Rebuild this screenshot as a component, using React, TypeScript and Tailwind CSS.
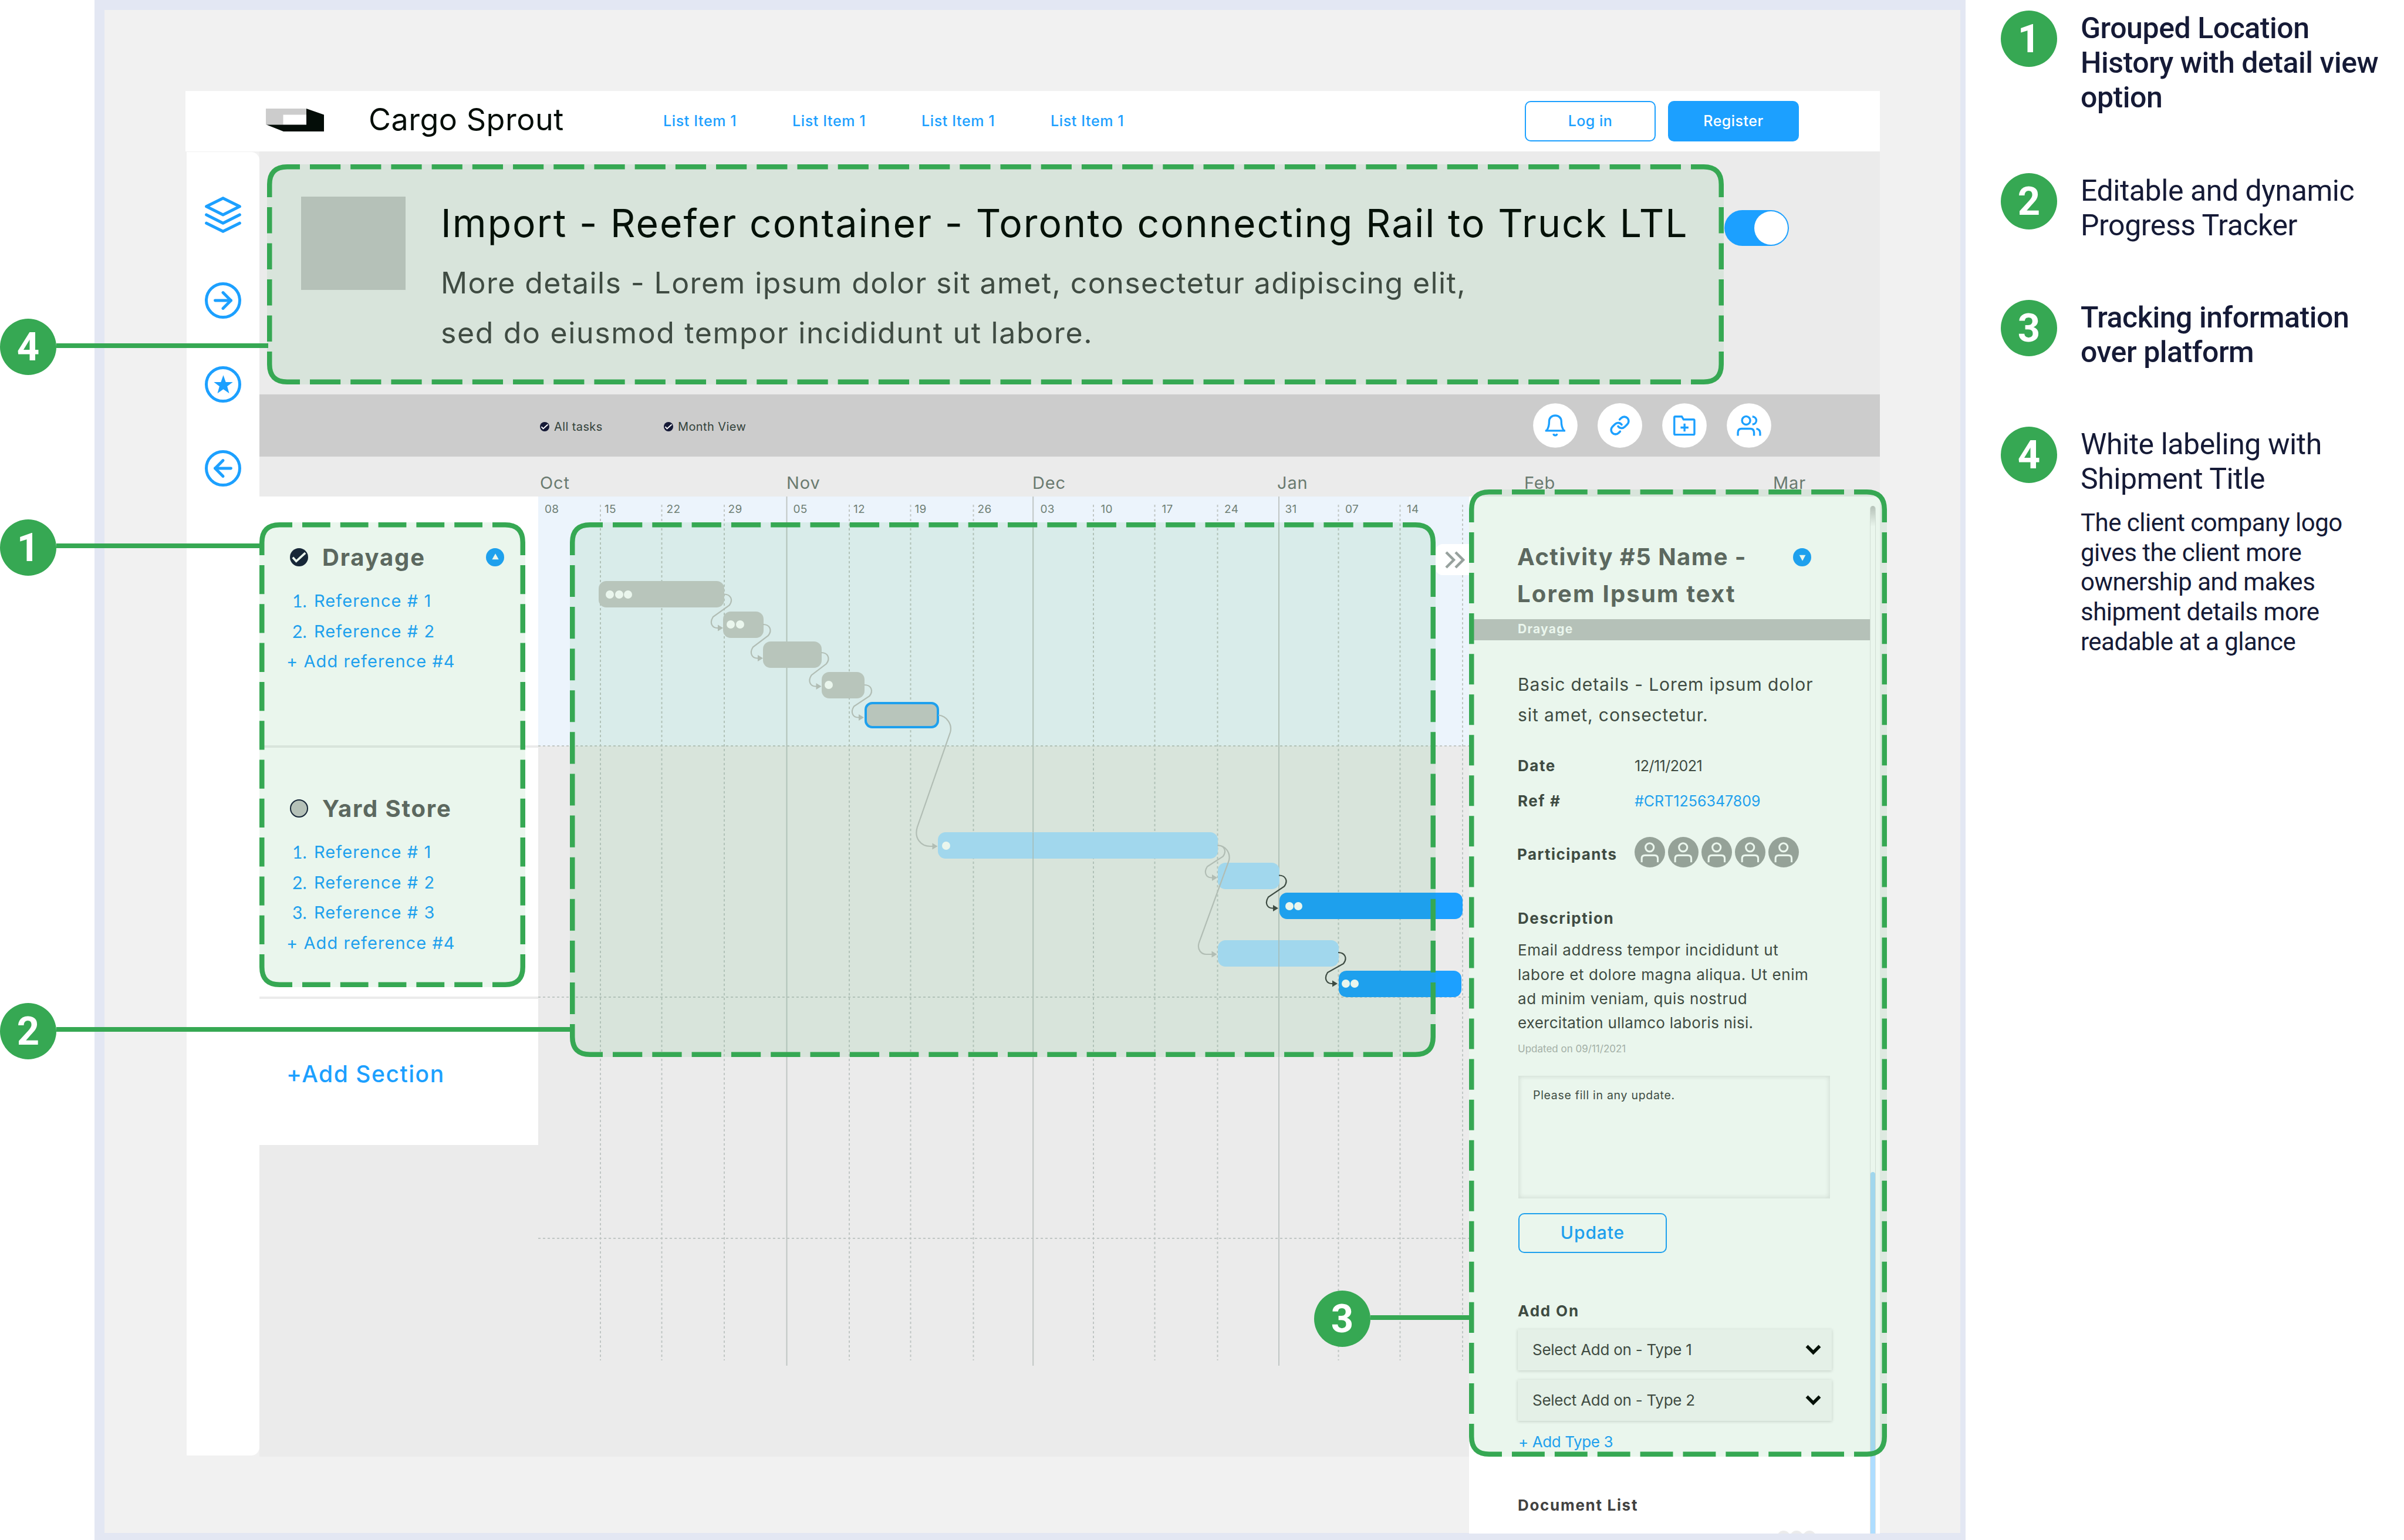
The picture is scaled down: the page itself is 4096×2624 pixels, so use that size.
import React from "react"
import { FiArrowLeft, FiArrowRight, FiLayers, FiLink } from "react-icons/fi"

const GREEN = "#36a853"

// ── Timeline data (px on the chart canvas) ──
const weeks = [
  { label: "08", width: 102 },
  { label: "15", width: 105.5 },
  { label: "22", width: 105 },
  { label: "29", width: 111 },
  { label: "05", width: 102.5 },
  { label: "12", width: 104.5 },
  { label: "19", width: 107 },
  { label: "26", width: 107 },
  { label: "03", width: 103 },
  { label: "10", width: 104 },
  { label: "17", width: 106.5 },
  { label: "24", width: 103.5 },
  { label: "31", width: 102.5 },
  { label: "07", width: 105 },
  { label: "14", width: 90 },
]

const months = [
  { label: "Oct", width: 420 },
  { label: "Nov", width: 419 },
  { label: "Dec", width: 417 },
  { label: "Jan", width: 421 },
  { label: "Feb", width: 424 },
  { label: "Mar", width: 120 },
]

const weekLines = [106, 210.5, 317, 530, 634.5, 741.5, 946, 1050.5, 1157.5, 1363.5, 1468.5, 1575]
const monthLines = [423.5, 843.2, 1262]
const rowLines = [425, 853, 1264]

type Bar = { x: number; y: number; w: number; tone: string; dots: number; pad: number }

const bars: Bar[] = [
  { x: 103, y: 144, w: 213.5, tone: "bg-[#c8c9c8]", dots: 3, pad: 12 },
  { x: 315, y: 195.5, w: 68.5, tone: "bg-[#c8c9c8]", dots: 2, pad: 6 },
  { x: 383, y: 247, w: 99.5, tone: "bg-[#c8c9c8]", dots: 0, pad: 0 },
  { x: 483, y: 298.5, w: 73, tone: "bg-[#c8c9c8]", dots: 1, pad: 5 },
  { x: 555.5, y: 350, w: 127, tone: "bg-[#c8c9c8] border-4 border-[#1ca0ff]", dots: 0, pad: 0 },
  { x: 680.5, y: 572, w: 477, tone: "bg-[#aeddff]", dots: 1, pad: 7 },
  { x: 1157.5, y: 623.5, w: 105, tone: "bg-[#aeddff]", dots: 0, pad: 0 },
  { x: 1262.5, y: 675, w: 312, tone: "bg-[#1ca0ff]", dots: 2, pad: 10 },
  { x: 1157.5, y: 755.5, w: 206, tone: "bg-[#aeddff]", dots: 0, pad: 0 },
  { x: 1363.5, y: 807.5, w: 209, tone: "bg-[#1ca0ff]", dots: 2, pad: 5 },
]

// Short S-shaped dependency between two neighbouring bars
function link(x0: number, y0: number, x1: number, y1: number) {
  return `M${x0} ${y0} C${x0 + 12} ${y0} ${x0 + 16} ${y0 + 10} ${x0 + 9} ${y0 + 19} L${x1 - 17} ${y1 - 19} C${x1 - 24} ${y1 - 8} ${x1 - 18} ${y1} ${x1 - 10} ${y1} H${x1 - 4}`
}

const links = [
  { d: link(316.5, 166.5, 315, 224), tip: [315, 224], color: "#c0c0c0" },
  { d: link(383, 218, 383, 275.5), tip: [383, 275.5], color: "#c0c0c0" },
  { d: link(482, 266, 482.5, 323.5), tip: [482.5, 323.5], color: "#c0c0c0" },
  { d: link(555.5, 321, 555, 376.5), tip: [555, 376.5], color: "#c0c0c0" },
  {
    d: "M682 372.5 C696 374 706 388 702 402 L646 563 C640 582 652 596 668 596 H676",
    tip: [680.5, 596],
    color: "#c0c0c0",
  },
  { d: link(1157.5, 594.5, 1157, 649.5), tip: [1157, 649.5], color: "#c0c0c0" },
  {
    d: "M1157.5 594.5 C1170 594 1180 606 1177 620 L1126 760 C1122 772 1130 780 1138 780 H1152",
    tip: [1156.5, 780],
    color: "#c0c0c0",
  },
  { d: link(1262, 645.5, 1261, 701.5), tip: [1261, 701.5], color: "#3f4141" },
  { d: link(1363, 777, 1362, 830), tip: [1362, 830], color: "#3f4141" },
]

function CheckBadge({ className }: { className: string }) {
  return (
    <svg viewBox="0 0 110 110" className={className} aria-hidden="true">
      <circle cx="55" cy="55" r="55" fill="#151936" />
      <path d="M17 56 L38 79 L93 29" fill="none" stroke="#fff" strokeWidth="13" />
    </svg>
  )
}

function ToggleBadge({ down }: { down?: boolean }) {
  return (
    <svg viewBox="0 0 110 110" className="size-[31px] shrink-0" aria-hidden="true">
      <circle cx="55" cy="55" r="55" fill="#1ca0ff" />
      <path d={down ? "M57 77 L76 42 H38 Z" : "M57 33 L77 68 H37 Z"} fill="#fff" />
    </svg>
  )
}

function Logo() {
  return (
    <svg viewBox="0 0 99 39" className="w-[99px] h-[39px] mb-[5px]" aria-hidden="true">
      <path d="M0 0 H69 V10.500 H29.500 V27.500 H0 Z" fill="#ccc" />
      <path d="M69 0 L99 10.500 V39 H30 L1 27.500 H69 Z" fill="#040d08" />
    </svg>
  )
}

function RoundIcon({ children }: { children: React.ReactNode }) {
  return (
    <div className="size-[62px] rounded-full border-[5px] border-[#1ca0ff] flex items-center justify-center text-[#1ca0ff]">
      {children}
    </div>
  )
}

function Header() {
  return (
    <header className="h-[103px] bg-white flex items-center pl-[137px] pr-[138px]">
      <Logo />
      <span className="w-[502px] ml-[76px] mb-[5px] text-[52px] leading-none tracking-[0.01em] text-[#040d08]">
        Cargo Sprout
      </span>
      <nav className="flex text-[25px] font-medium text-[#1ca0ff]">
        {[1, 2, 3, 4].map((n) => (
          <a key={n} className="w-[220px] whitespace-nowrap tracking-[0.025em]">
            List Item 1
          </a>
        ))}
      </nav>
      <div className="ml-auto flex gap-[21px] text-[25px] font-medium tracking-[0.02em]">
        <button className="w-[223px] h-[69px] rounded-[10px] border-2 border-[#1ca0ff] text-[#1ca0ff]">
          Log in
        </button>
        <button className="w-[223px] h-[69px] rounded-[10px] bg-[#1ca0ff] text-white">Register</button>
      </div>
    </header>
  )
}

function Sidebar() {
  return (
    <aside className="w-[124px] ml-[2px] mt-px h-[2221px] bg-white rounded-r-[14px] flex flex-col items-center pt-[73px] text-[#1ca0ff]">
      <FiLayers className="size-[68px]" strokeWidth={1.8} />
      <div className="mt-[81px]">
        <RoundIcon>
          <FiArrowRight className="size-[46px]" strokeWidth={2.6} />
        </RoundIcon>
      </div>
      <div className="mt-[81px]">
        <RoundIcon>
          <svg viewBox="0 0 24 24" className="size-[37px]" fill="currentColor" aria-hidden="true">
            <path d="M12 1.500 L14.700 9 H22.500 L16.300 13.800 L18.500 21.500 L12 17 L5.500 21.500 L7.700 13.800 L1.500 9 H9.300 Z" />
          </svg>
        </RoundIcon>
      </div>
      <div className="mt-[81px]">
        <RoundIcon>
          <FiArrowLeft className="size-[46px]" strokeWidth={2.6} />
        </RoundIcon>
      </div>
    </aside>
  )
}

function TitleBlock() {
  return (
    <section className="h-[414px] flex items-start pl-[71px] pt-[72px]">
      <div className="w-[178px] h-[159px] mt-[5px] bg-[#c4c4c4]" />
      <div className="ml-[60px] w-[2187px] whitespace-nowrap">
        <h1 className="text-[66px] leading-[100px] tracking-[0.031em] text-black">
          Import - Reefer container - Toronto connecting Rail to Truck LTL
        </h1>
        <p className="mt-[10px] text-[50px] leading-[85px] tracking-[0.028em] text-[#414141]">
          More details - Lorem ipsum dolor sit amet, consectetur adipiscing elit,
          <br />
          <span className="tracking-[0.033em]">sed do eiusmod tempor incididunt ut labore.</span>
        </p>
      </div>
      <div className="mt-[28px] w-[110px] h-[61px] rounded-full bg-[#1ca0ff] flex items-center justify-end pr-[2px]">
        <div className="size-[57px] rounded-full bg-white" />
      </div>
    </section>
  )
}

function CircleButton({ children }: { children: React.ReactNode }) {
  return (
    <svg
      viewBox="0 0 271 271"
      className="size-[76px]"
      fill="none"
      stroke="#1ca0ff"
      strokeWidth="12"
      aria-hidden="true"
    >
      <circle cx="135.500" cy="135.500" r="135" fill="#fff" stroke="none" />
      {children}
    </svg>
  )
}

function Toolbar() {
  return (
    <div className="h-[106px] bg-[#ccc] flex items-center pl-[478px] pr-[185px] text-[20px] tracking-[0.02em] text-[#33423b]">
      <div className="w-[211px] mt-[3px] flex items-center gap-[8px]">
        <CheckBadge className="size-[16px]" />
        All tasks
      </div>
      <div className="mt-[3px] flex items-center gap-[8px]">
        <CheckBadge className="size-[16px]" />
        Month View
      </div>
      <div className="ml-auto flex gap-[34px]">
        <CircleButton>
          <path d="M74 167 H196" />
          <path d="M83 165 C94 152 98 140 98 110 C98 88 115 75 135 75 C155 75 172 88 172 110 C172 140 176 152 187 165" />
          <path d="M124 186 C127 199 143 199 146 186" />
        </CircleButton>
        <div className="size-[76px] rounded-full bg-white flex items-center justify-center text-[#1ca0ff]">
          <FiLink className="size-[36px]" strokeWidth={2.4} />
        </div>
        <CircleButton>
          <path d="M74 87 Q74 81 80 81 H119 L130 99 H190 Q196 99 196 105 V185 Q196 191 190 191 H80 Q74 191 74 185 Z" />
          <path d="M112 148 H160 M136 124 V172" />
        </CircleButton>
        <CircleButton>
          <circle cx="118" cy="105" r="25" />
          <path d="M156 81 C188 84 188 126 156 129" />
          <path d="M68 198 V178 Q68 155 91 155 H143 Q166 155 166 178 V198" />
          <path d="M180 155 Q203 160 203 180 V198" />
        </CircleButton>
      </div>
    </div>
  )
}

function Section({ title, done, refs }: { title: string; done?: boolean; refs: number }) {
  return (
    <div className="h-[428px] pt-[73px] border-b-4 border-[#ebebeb] text-[#1ca0ff]">
      <div className="h-[61px] flex items-center pl-[52px] pr-[58px]">
        {done ? (
          <CheckBadge className="size-[31px]" />
        ) : (
          <div className="size-[31px] rounded-full bg-[#c4c4c4] border-2 border-[#151936]" />
        )}
        <h2 className="ml-[24px] flex-1 text-[40px] font-bold tracking-[0.045em] text-[#616161]">{title}</h2>
        {done && <ToggleBadge />}
      </div>
      <ol className="mt-[18px] pl-[56px] text-[29px] leading-[51.5px]">
        {Array.from({ length: refs }, (_, i) => (
          <li key={i} className="flex">
            <span className="w-[37px] font-[Lato] text-[30px]">{i + 1}.</span>
            <span className="tracking-[0.037em]">Reference # {i + 1}</span>
          </li>
        ))}
      </ol>
      <p className="pl-[46px] text-[29px] leading-[51.5px] tracking-[0.037em]">+ Add reference #4</p>
    </div>
  )
}

function Gantt() {
  return (
    <div className="relative w-[1586px] h-[1481px]">
      <div className="h-[425px] bg-[#ecf4fc] flex pl-[11px] pt-[9px] text-[19px] leading-[26px] tracking-[0.02em] text-[#6f7f75]">
        {weeks.map((week) => (
          <span key={week.label} className="shrink-0" style={{ width: week.width }}>
            {week.label}
          </span>
        ))}
      </div>

      <svg viewBox="0 0 1586 1481" className="absolute inset-0 w-full h-full" stroke="#c0c6c4" aria-hidden="true">
        {weekLines.map((x) => (
          <line key={x} x1={x} x2={x} y1={14} y2={1472} strokeWidth="2" strokeDasharray="4 4" />
        ))}
        {rowLines.map((y) => (
          <line key={y} x1={0} x2={1586} y1={y} y2={y} strokeWidth="2" strokeDasharray="4 4" />
        ))}
        {monthLines.map((x) => (
          <line key={x} x1={x} x2={x} y1={0} y2={1481} strokeWidth="2" />
        ))}
      </svg>

      {bars.map((bar, i) => (
        <div
          key={i}
          className={`absolute h-[45px] rounded-[13px] flex items-center gap-[1.500px] ${bar.tone}`}
          style={{ left: bar.x, top: bar.y, width: bar.w, paddingLeft: bar.pad }}
        >
          {Array.from({ length: bar.dots }, (_, d) => (
            <span key={d} className="size-[14px] rounded-full bg-white" />
          ))}
        </div>
      ))}

      <svg viewBox="0 0 1586 1481" className="absolute inset-0 w-full h-full" fill="none" aria-hidden="true">
        <path d="M843.200 572.500 V617 M1262 756 V801" stroke="#b4bdc0" strokeWidth="1.500" />
        {links.map((l, i) => (
          <g key={i}>
            <path d={l.d} stroke={l.color} strokeWidth="2.200" />
            <path d={`M${l.tip[0]} ${l.tip[1]} l-9 -5.500 v11 Z`} fill={l.color} />
          </g>
        ))}
      </svg>

      {/* Collapse handle */}
      <div className="absolute right-0 top-[81px] w-[57px] h-[53px] rounded-l-[12px] bg-white flex items-center justify-center pl-[8px]">
        <svg viewBox="0 0 34 30" className="w-[34px] h-[30px]" fill="none" stroke="#97a19d" strokeWidth="4.500" aria-hidden="true">
          <path d="M2 2 L15 15 L2 28 M18 2 L31 15 L18 28" />
        </svg>
      </div>
    </div>
  )
}

function Avatar() {
  return (
    <svg viewBox="0 0 184 184" className="size-[52px]" fill="none" stroke="#fff" strokeWidth="11" aria-hidden="true">
      <circle cx="92" cy="92" r="92" fill="#a1a2a1" stroke="none" />
      <circle cx="91" cy="63" r="25" />
      <path d="M43 153 V131 Q43 111 63 111 H120 Q140 111 140 131 V153" />
    </svg>
  )
}

function AddOnSelect({ label }: { label: string }) {
  return (
    <div className="w-[535px] h-[70px] bg-[#f9f9f9] shadow-[0_1px_5px_rgba(0,0,0,0.18)] flex items-center justify-between pl-[25px] pr-[18px] text-[26px] tracking-[-0.01em] text-[#414141]">
      {label}
      <svg viewBox="0 0 26 18" className="w-[27px] h-[18px]" fill="none" stroke="#000" strokeWidth="5.500" aria-hidden="true">
        <path d="M2 2.500 L13 13.500 L24 2.500" />
      </svg>
    </div>
  )
}

function ActivityPanel() {
  return (
    <div className="relative w-[700px] h-[1767px] shrink-0 bg-white pt-[72px] overflow-hidden text-[#414141]">
      <div className="flex items-start pl-[82px] pr-[117px]">
        <h2 className="flex-1 text-[40px] leading-[62.500px] font-bold whitespace-nowrap text-[#616161]">
          <span className="tracking-[0.036em]">Activity #5 Name -</span>
          <br />
          <span className="tracking-[0.055em]">Lorem Ipsum text</span>
        </h2>
        <div className="mt-[16px]">
          <ToggleBadge down />
        </div>
      </div>
      <div className="mt-[12px] w-[683px] h-[36px] bg-[#c4c4c4] pl-[83px] text-[21px] leading-[33px] font-bold tracking-[0.06em] text-white">
        Drayage
      </div>

      <div className="pl-[83px]">
        <p className="mt-[50px] text-[30px] leading-[51.600px] tracking-[0.03em] whitespace-nowrap">
          Basic details - Lorem ipsum dolor
          <br />
          sit amet, consectetur.
        </p>

        <dl className="mt-[31px] text-[25px] leading-[60px]">
          <div className="flex">
            <dt className="w-[199px] text-[26px] font-bold tracking-[0.06em]">Date</dt>
            <dd className="tracking-[-0.02em]">12/11/2021</dd>
          </div>
          <div className="flex">
            <dt className="w-[199px] text-[26px] font-bold tracking-[0.06em]">Ref #</dt>
            <dd className="text-[#1ca0ff]">#CRT1256347809</dd>
          </div>
          <div className="flex mt-[29px]">
            <dt className="w-[200px] text-[26px] font-bold tracking-[0.055em] pt-[2px] -ml-px">Participants</dt>
            <dd className="flex items-center gap-[5px] h-[56px]">
              {[0, 1, 2, 3, 4].map((i) => (
                <Avatar key={i} />
              ))}
            </dd>
          </div>
        </dl>

        <h3 className="mt-[59px] text-[26px] leading-[40px] font-bold tracking-[0.06em]">Description</h3>
        <p className="mt-[13px] text-[26px] leading-[41.400px] tracking-[0.022em] whitespace-nowrap">
          Email address tempor incididunt ut
          <br />
          labore et dolore magna aliqua. Ut enim
          <br />
          ad minim veniam, quis nostrud
          <br />
          <span className="tracking-[0.01em]">exercitation ullamco laboris nisi.</span>
        </p>
        <p className="mt-[11px] text-[17px] leading-[24px] text-[#b1b1b1]">Updated on 09/11/2021</p>

        <div className="mt-[34px] ml-px w-[531px] h-[209px] shadow-[inset_0_0_7px_2px_rgba(0,0,0,0.1)] pl-[25px] pt-[20px] text-[19.500px] leading-[26px] tracking-[0.036em]">
          Please fill in any update.
        </div>
        <button className="mt-[25px] ml-px w-[253px] h-[68px] rounded-[10px] border-2 border-[#1ca0ff] text-[30px] font-medium tracking-[0.03em] text-[#1ca0ff]">
          Update
        </button>

        <h3 className="mt-[79px] text-[26px] leading-[40px] font-bold tracking-[0.07em]">Add On</h3>
        <div className="mt-[11px] flex flex-col gap-[16px]">
          <AddOnSelect label="Select Add on - Type 1" />
          <AddOnSelect label="Select Add on - Type 2" />
        </div>
        <p className="mt-[16px] ml-px text-[26px] leading-[40px] tracking-[-0.015em] text-[#1ca0ff]">+ Add Type 3</p>

        <h3 className="mt-[68px] text-[26px] leading-[40px] font-bold tracking-[0.065em]">Document List</h3>
        <div className="mt-[23px] ml-[442px] flex">
          {[0, 1, 2].map((i) => (
            <span key={i} className="size-[22px] rounded-full bg-[#ebebeb]" />
          ))}
        </div>
      </div>

      {/* Scrollbar */}
      <div className="absolute top-[16px] bottom-0 right-[7px] w-[10px] rounded-t-full border-x border-[#e4e4e4] bg-linear-to-b from-[#c4c4c4] from-0% to-white to-2%">
        <div className="mt-[1135px] h-full w-full rounded-t-full bg-[#aeddff]" />
      </div>
    </div>
  )
}

function Badge({ children }: { children: React.ReactNode }) {
  return (
    <div className="size-[96px] shrink-0 rounded-full bg-[#36a853] flex items-center justify-center font-[Roboto] text-[67px] leading-none font-bold text-white">
      {children}
    </div>
  )
}

// Tinted highlight with a dashed outline; cols/rows = dashes between the corners
function Highlight({ w, h, cols, rows, className }: { w: number; h: number; cols: number; rows: number; className: string }) {
  const c = 56
  const r = 30
  const m = 4.25
  const gap = 17
  const px = (w - 2 * c - gap) / cols
  const py = (h - 2 * c - gap) / rows
  return (
    <div className={`absolute rounded-[34px] bg-[#34a853]/10 ${className}`} style={{ width: w, height: h }}>
      <svg viewBox={`0 0 ${w} ${h}`} className="w-full h-full" fill="none" stroke={GREEN} strokeWidth="8.500" aria-hidden="true">
        <path d={`M${m} ${c} V${m + r} Q${m} ${m} ${m + r} ${m} H${c}`} />
        <path d={`M${w - c} ${m} H${w - m - r} Q${w - m} ${m} ${w - m} ${m + r} V${c}`} />
        <path d={`M${w - m} ${h - c} V${h - m - r} Q${w - m} ${h - m} ${w - m - r} ${h - m} H${w - c}`} />
        <path d={`M${c} ${h - m} H${m + r} Q${m} ${h - m} ${m} ${h - m - r} V${h - c}`} />
        {[m, h - m].map((y) => (
          <line key={y} x1={c + gap} x2={w - c - gap} y1={y} y2={y} strokeDasharray={`${px - gap} ${gap}`} />
        ))}
        {[m, w - m].map((x) => (
          <line key={x} x1={x} x2={x} y1={c + gap} y2={h - c - gap} strokeDasharray={`${py - gap} ${gap}`} />
        ))}
      </svg>
    </div>
  )
}

function Callouts() {
  return (
    <>
      <Highlight w={2482} h={375} cols={34} rows={4} className="left-[455px] top-[280px]" />
      <Highlight w={453} h={792} cols={5} rows={10} className="left-[442px] top-[890px]" />
      <Highlight w={1475} h={911} cols={20} rows={11} className="left-[971px] top-[890px]" />
      <Highlight w={712} h={1648} cols={8} rows={22} className="left-[2503px] top-[834px]" />

      <div className="absolute left-0 top-[543px] flex">
        <Badge>4</Badge>
        <div className="mt-[42px] w-[361px] h-[8px] bg-[#36a853]" />
      </div>
      <div className="absolute left-0 top-[885px] flex">
        <Badge>1</Badge>
        <div className="mt-[41px] w-[348px] h-[8px] bg-[#36a853]" />
      </div>
      <div className="absolute left-0 top-[1709px] flex">
        <Badge>2</Badge>
        <div className="mt-[41px] w-[877px] h-[8px] bg-[#36a853]" />
      </div>
      <div className="absolute left-[2239px] top-[2199px] flex">
        <Badge>3</Badge>
        <div className="mt-[42px] w-[170px] h-[8px] bg-[#36a853]" />
      </div>
    </>
  )
}

const legend = [
  { title: ["Grouped Location", "History with detail view", "option"], strong: true, height: "h-[277px]" },
  { title: ["Editable and dynamic", "Progress Tracker"], strong: false, height: "h-[216px]" },
  { title: ["Tracking information", "over platform"], strong: true, height: "h-[216px]" },
  {
    title: ["White labeling with", "Shipment Title"],
    strong: false,
    height: "h-[500px]",
    body: [
      "The client company logo",
      "gives the client more",
      "ownership and makes",
      "shipment details more",
      "readable at a glance",
    ],
  },
]

function Legend() {
  return (
    <div className="ml-[60px] pt-[18px] font-[Roboto] text-[#151a36] whitespace-nowrap">
      {legend.map((item, i) => (
        <div key={i} className={`flex ${item.height}`}>
          <Badge>{i + 1}</Badge>
          <div className="ml-[40px] pt-px">
            <h2
              className={`text-[50px] leading-[59px] tracking-[-0.009em] ${item.strong ? "font-medium" : "font-normal"}`}
            >
              {item.title.map((line) => (
                <span key={line} className="block">
                  {line}
                </span>
              ))}
            </h2>
            {item.body && (
              <p className="mt-[20px] text-[42px] leading-[50.700px] tracking-[-0.012em]">
                {item.body.map((line) => (
                  <span key={line} className="block">
                    {line}
                  </span>
                ))}
              </p>
            )}
          </div>
        </div>
      ))}
    </div>
  )
}

export default function App() {
  return (
    <div className="relative w-[4096px] h-[2624px] overflow-hidden bg-white flex font-[Inter]">
      <div className="ml-[161px] w-[3188px] shrink-0 bg-[#f1f1f1] border-[#e3e7f3] border-t-[17px] border-l-[17px] border-r-[9px] border-b-[12px] pt-[138px] pl-[138px]">
        <div className="w-[2887px]">
          <Header />
          <div className="flex">
            <Sidebar />
            <main className="flex-1 h-[2224px] bg-[#ebebeb]">
              <TitleBlock />
              <Toolbar />
              <div className="h-[68px] pl-[478px] pt-[26px] flex text-[29px] leading-[38px] tracking-[0.03em] text-[#6a7a70]">
                {months.map((month) => (
                  <span key={month.label} className="shrink-0" style={{ width: month.width }}>
                    {month.label}
                  </span>
                ))}
              </div>
              <div className="flex items-start">
                <div className="w-[475px] h-[1105px] bg-white">
                  <Section title="Drayage" done refs={2} />
                  <Section title="Yard Store" refs={3} />
                  <p className="pt-[98px] pl-[46px] text-[39px] leading-[60px] font-medium tracking-[0.039em] text-[#1ca0ff]">
                    +Add Section
                  </p>
                </div>
                <Gantt />
                <ActivityPanel />
              </div>
            </main>
          </div>
        </div>
      </div>
      <Legend />
      <Callouts />
    </div>
  )
}
